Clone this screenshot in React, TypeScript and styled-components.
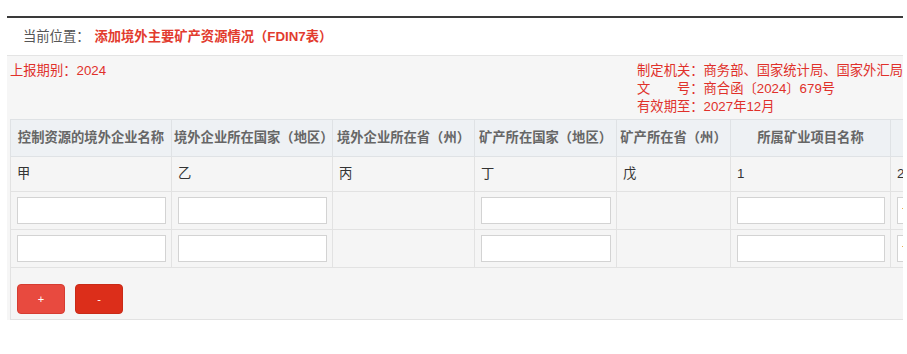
import React from "react";
import styled, { createGlobalStyle } from "styled-components";

const GlobalStyle = createGlobalStyle`
  body {
    margin: 0;
    background: #fff;
    font-family: "Liberation Sans", "Noto Sans CJK SC", sans-serif;
    font-size: 13.3px;
    color: #333;
  }
`;

const Page = styled.div`
  margin: 16px 4px 0 7px;
  border-top: 2px solid #3a3a3a;
  overflow: hidden;
`;

const Crumb = styled.div`
  height: 37px;
  display: flex;
  align-items: center;
  padding-left: 16px;
  color: #555;
  line-height: 18px;
`;

const CrumbTitle = styled.span`
  margin-left: 5px;
  color: #e23b2e;
  font-weight: bold;
`;

const Panel = styled.div`
  background: #f6f6f6;
  border-top: 1px solid #e4e4e4;
`;

const InfoRow = styled.div`
  display: flex;
  justify-content: space-between;
  padding: 6px 0 3px 3px;
  color: #e0302a;
  line-height: 18px;
`;

const InfoBlock = styled.div`
  display: flex;
  flex-direction: column;
  white-space: nowrap;
`;

const Table = styled.table`
  margin-left: 3px;
  border-collapse: collapse;
  table-layout: fixed;
  width: 1200px;
`;

const Th = styled.th`
  height: 36px;
  padding: 0 2px;
  background: #eef1f4;
  border: 1px solid #dfe2e5;
  color: #666;
  font-weight: bold;
  text-align: center;
  white-space: nowrap;
  overflow: hidden;
  line-height: 20px;
`;

const Td = styled.td`
  height: ${(p: { $h?: number }) => p.$h ?? 34}px;
  padding: 0 5px 0 6px;
  border: 1px solid #e2e2e2;
  background: #f5f5f5;
  color: #333;
  line-height: 20px;
  white-space: nowrap;
  overflow: hidden;
`;

const Input = styled.input`
  display: block;
  box-sizing: border-box;
  width: 100%;
  height: 27px;
  border: 1px solid #d3d3d3;
  background: #fff;
  font: inherit;
  padding: 0 4px;
  &::placeholder {
    color: #8a6a2f;
  }
`;

const ButtonCell = styled.td`
  padding: 16px 6px 5px;
  border: 1px solid #e2e2e2;
  background: #f5f5f5;
`;

const Button = styled.button<{ $dark?: boolean }>`
  width: 48px;
  height: 30px;
  margin-right: 10px;
  border: 1px solid ${(p) => (p.$dark ? "#c92a17" : "#d63c31")};
  border-radius: 4px;
  background: ${(p) => (p.$dark ? "#dc2e1a" : "#e84a3f")};
  color: #fff;
  font-size: 11px;
  font-family: "Liberation Sans", sans-serif;
  cursor: pointer;
`;

const widths = [161, 161, 142, 142, 114, 160, 161, 159];
const headers = [
  "控制资源的境外企业名称",
  "境外企业所在国家（地区）",
  "境外企业所在省（州）",
  "矿产所在国家（地区）",
  "矿产所在省（州）",
  "所属矿业项目名称",
  "获取时间",
  "矿种",
];
const sample = ["甲", "乙", "丙", "丁", "戊", "1", "2", "3"];
// which columns are editable in the added rows
const editable = [true, true, false, true, false, true, true, true];

const App = () => {
  const rows = [0, 1];
  return (
    <>
      <GlobalStyle />
      <Page>
        <Crumb>
          当前位置：<CrumbTitle>添加境外主要矿产资源情况（FDIN7表）</CrumbTitle>
        </Crumb>
        <Panel>
          <InfoRow>
            <div>上报期别：2024</div>
            <InfoBlock>
              <span>制定机关：商务部、国家统计局、国家外汇局</span>
              <span>文　　号：商合函〔2024〕679号</span>
              <span>有效期至：2027年12月</span>
            </InfoBlock>
          </InfoRow>
          <Table>
            <colgroup>
              {widths.map((w, i) => (
                <col key={i} style={{ width: w }} />
              ))}
            </colgroup>
            <thead>
              <tr>
                {headers.map((h) => (
                  <Th key={h}>{h}</Th>
                ))}
              </tr>
            </thead>
            <tbody>
              <tr>
                {sample.map((s, i) => (
                  <Td key={i}>{s}</Td>
                ))}
              </tr>
              {rows.map((r) => (
                <tr key={r}>
                  {editable.map((e, i) => (
                    <Td key={i} $h={37}>
                      {e ? <Input placeholder={i === 6 ? "请选择" : ""} /> : null}
                    </Td>
                  ))}
                </tr>
              ))}
              <tr>
                <ButtonCell colSpan={widths.length}>
                  <Button>+</Button>
                  <Button $dark>-</Button>
                </ButtonCell>
              </tr>
            </tbody>
          </Table>
        </Panel>
      </Page>
    </>
  );
};

export default App;
